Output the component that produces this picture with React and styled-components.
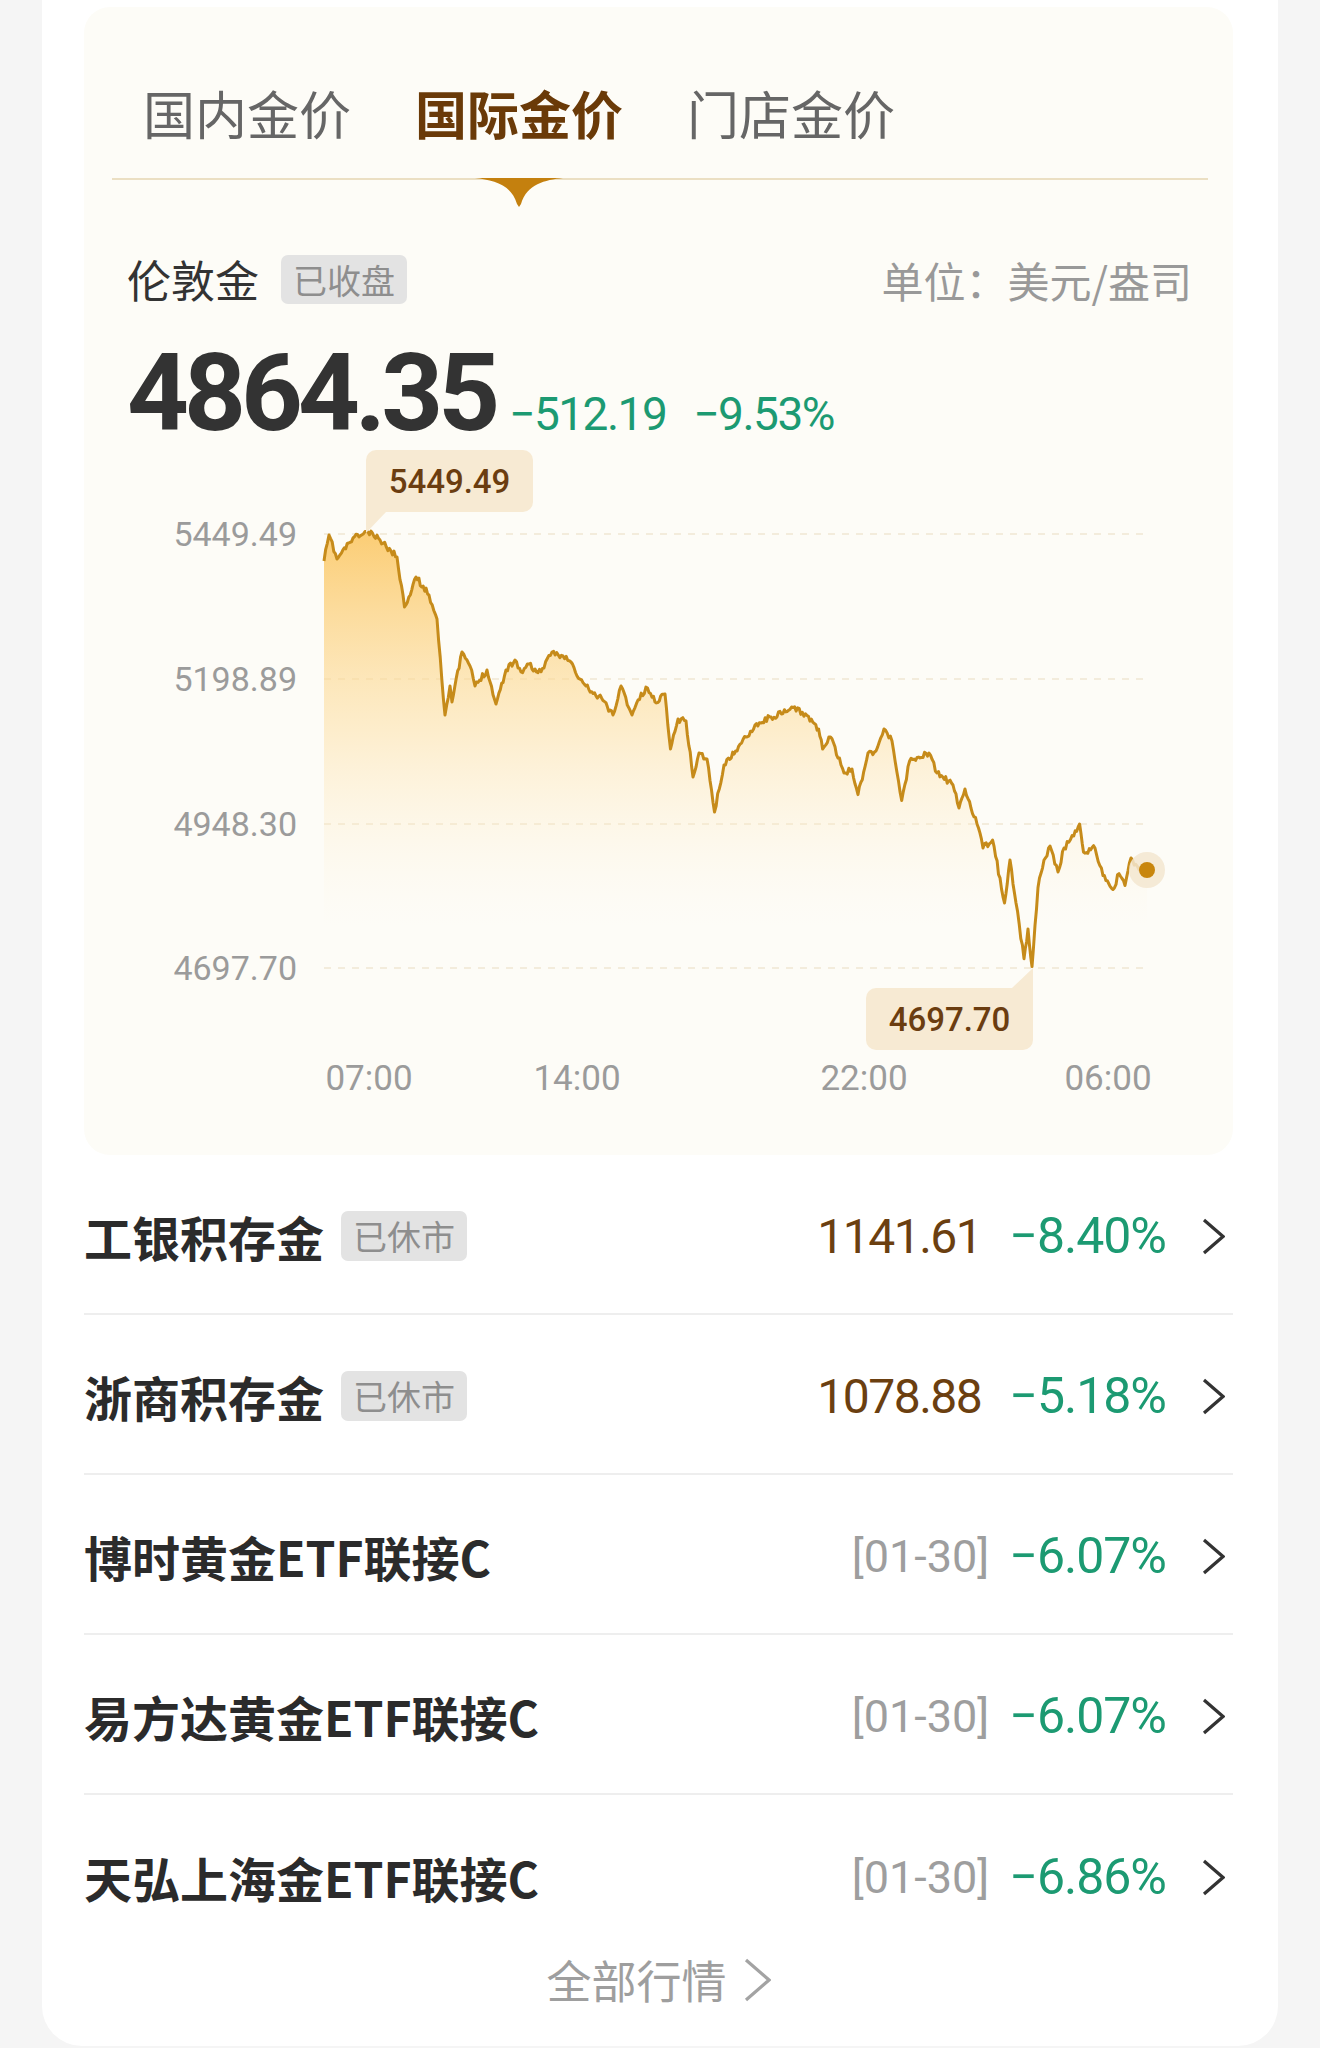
import React from "react";
import styled, { createGlobalStyle } from "styled-components";

const GlobalStyle = createGlobalStyle`
  body {
    margin: 0;
    background: #f5f5f5;
    font-family: "Noto Sans CJK SC", "Noto Sans", sans-serif;
  }
`;

const NUM = `Roboto, "Noto Sans", sans-serif`;

// key points of the price curve, picked off the screenshot (page coords)
const KEY = [
  [324, 561], [329, 535], [337, 559], [353, 538], [368, 532], [380, 540], [391, 551],
  [397, 557], [404.5, 607], [416, 577], [429, 595], [437, 619], [445, 715], [450, 686],
  [452, 702], [462, 652], [470, 666], [475, 686], [487, 670], [496, 704], [506, 670],
  [515, 660], [521, 672], [529, 664], [536.5, 672], [544, 668], [552, 652], [563, 656],
  [571, 662], [577, 676], [586, 686], [596, 696], [601.6, 698], [613, 715], [621, 686],
  [632, 715], [638, 700], [647.5, 688], [655, 702], [665, 694], [670.5, 749], [678, 719],
  [686, 721], [693, 777], [699, 753], [707, 759], [714.5, 812], [724, 765], [735.6, 751],
  [755, 725], [771, 717], [783, 713.5], [793, 707.6], [807, 715.5], [818.6, 729],
  [822.6, 749], [830.5, 737], [844, 773], [852, 769], [858, 794.6], [868, 753], [876, 751],
  [884, 729], [892, 741], [901.7, 800.5], [909.6, 761], [929, 753], [937, 773], [953, 785],
  [959, 808], [965, 789], [977, 824], [983, 848], [992.6, 840], [1004.5, 903], [1010, 860],
  [1016, 903], [1024, 958.7], [1028, 929], [1032, 966.6], [1038, 887.5], [1044, 860],
  [1050, 846], [1058, 872], [1064, 848], [1073.7, 836], [1079.6, 824], [1083.5, 852],
  [1095, 848], [1103, 875.6], [1113, 889.5], [1119, 873.7], [1125, 885.5], [1131, 858],
  [1139, 869.7], [1147, 869.7],
];

const ORIGIN_X = 84;
const ORIGIN_Y = 447;

function buildLine() {
  let seed = 11;
  const rand = () => {
    seed = (seed * 16807) % 2147483647;
    return seed / 2147483647;
  };
  const pts = [];
  for (let i = 0; i < KEY.length - 1; i++) {
    const [x0, y0] = KEY[i];
    const [x1, y1] = KEY[i + 1];
    const steps = Math.max(1, Math.round((x1 - x0) / 1.5));
    for (let s = 0; s < steps; s++) {
      const t = s / steps;
      const jitter = s === 0 ? 0 : (rand() - 0.5) * 6;
      pts.push([x0 + (x1 - x0) * t, y0 + (y1 - y0) * t + jitter]);
    }
  }
  pts.push(KEY[KEY.length - 1]);
  return pts.map(([x, y]) => [x - ORIGIN_X, y - ORIGIN_Y]);
}

const LINE = buildLine();
const LINE_D = "M" + LINE.map(([x, y]) => `${x.toFixed(1)},${y.toFixed(1)}`).join(" L");
const FILL_D = `${LINE_D} L1063,521 L240,521 Z`;

const GRID = [
  { y: 87, label: "5449.49" },
  { y: 232, label: "5198.89" },
  { y: 377, label: "4948.30" },
  { y: 521, label: "4697.70" },
];

const TIMES = [
  { x: 285, label: "07:00" },
  { x: 493, label: "14:00" },
  { x: 780, label: "22:00" },
  { x: 1024, label: "06:00" },
];

const ROWS = [
  { name: "工银积存金", badge: "已休市", price: "1141.61", change: "−8.40%" },
  { name: "浙商积存金", badge: "已休市", price: "1078.88", change: "−5.18%" },
  { name: "博时黄金ETF联接C", date: "[01-30]", change: "−6.07%" },
  { name: "易方达黄金ETF联接C", date: "[01-30]", change: "−6.07%" },
  { name: "天弘上海金ETF联接C", date: "[01-30]", change: "−6.86%" },
];

function Chevron({ color = "#333", w = 23, h = 37 }) {
  return (
    <svg width={w} height={h} viewBox={`0 0 ${w} ${h}`}>
      <polyline
        points={`2,2 ${w - 2},${h / 2} 2,${h - 2}`}
        fill="none"
        stroke={color}
        strokeWidth="3.2"
        strokeLinejoin="miter"
      />
    </svg>
  );
}

function PriceChart() {
  return (
    <ChartWrap>
      <svg width="1149" height="708" viewBox="0 0 1149 708">
        <defs>
          <linearGradient id="goldFill" x1="0" y1="87" x2="0" y2="480" gradientUnits="userSpaceOnUse">
            <stop offset="0" stopColor="#fbc867" stopOpacity="0.9" />
            <stop offset="0.5" stopColor="#fddea0" stopOpacity="0.5" />
            <stop offset="1" stopColor="#fef3dd" stopOpacity="0" />
          </linearGradient>
        </defs>
        {GRID.map((g) => (
          <g key={g.label}>
            <line x1="240" x2="1063" y1={g.y} y2={g.y} stroke="#efe6d4" strokeWidth="1.5" strokeDasharray="7 7" />
            <text x="213" y={g.y + 12} textAnchor="end" fontFamily="Roboto" fontSize="34" fill="#9b9b9b">
              {g.label}
            </text>
          </g>
        ))}
        <path d={FILL_D} fill="url(#goldFill)" />
        <path d={LINE_D} fill="none" stroke="#c68b1a" strokeWidth="3" strokeLinejoin="round" />
        <circle cx="1063" cy="423" r="18" fill="#f3e6d0" opacity="0.85" />
        <circle cx="1063" cy="423" r="8" fill="#c8860e" />
        {TIMES.map((t) => (
          <text key={t.label} x={t.x} y="643" textAnchor="middle" fontFamily="Roboto" fontSize="35" fill="#9b9b9b">
            {t.label}
          </text>
        ))}
      </svg>
      <Tip $x={282} $y={3} $tail="bl">5449.49</Tip>
      <Tip $x={782} $y={541} $tail="tr">4697.70</Tip>
    </ChartWrap>
  );
}

export default function App() {
  return (
    <Page>
      <GlobalStyle />
      <Card>
        <Panel>
          <TabBar>
            <Tab>国内金价</Tab>
            <Tab $active>
              国际金价
              <Indicator width="88" height="29" viewBox="0 0 88 29">
                <path d="M0,0 L88,0 C70,2 52,6 46,26 L44,29 L42,26 C36,6 18,2 0,0 Z" fill="#c4800e" />
              </Indicator>
            </Tab>
            <Tab>门店金价</Tab>
          </TabBar>

          <InfoHeader>
            <TitleGroup>
              <Title>伦敦金</Title>
              <Badge $h={49}>已收盘</Badge>
            </TitleGroup>
            <Unit>单位：美元/盎司</Unit>
          </InfoHeader>

          <PriceRow>
            <BigPrice>4864.35</BigPrice>
            <Delta $gap={14}>−512.19</Delta>
            <Delta $gap={27}>−9.53%</Delta>
          </PriceRow>

          <PriceChart />
        </Panel>

        <List>
          {ROWS.map((r, i) => (
            <Row key={r.name} $last={i === ROWS.length - 1}>
              <NameGroup>
                <Name>{r.name}</Name>
                {r.badge && <Badge $h={50}>{r.badge}</Badge>}
              </NameGroup>
              <Quote>
                {r.price && <ItemPrice>{r.price}</ItemPrice>}
                {r.date && <DateTag>{r.date}</DateTag>}
                <Change $gap={r.date ? 20 : 28}>{r.change}</Change>
                <Chevron />
              </Quote>
            </Row>
          ))}
        </List>

        <MoreLink>
          全部行情
          <Chevron color="#a3a3a3" w={27} h={44} />
        </MoreLink>
      </Card>
    </Page>
  );
}

const Page = styled.div`
  width: 1320px;
  min-height: 2048px;
  overflow: hidden;
`;

const Card = styled.div`
  box-sizing: border-box;
  width: 1236px;
  min-height: 2046px;
  margin-left: 42px;
  padding: 7px 45px 0 42px;
  background: #ffffff;
  border-radius: 0 0 40px 40px;
`;

const Panel = styled.div`
  display: flex;
  flex-direction: column;
  background: #fdfcf7;
  border-radius: 26px;
`;

const TabBar = styled.div`
  display: flex;
  gap: 64px;
  margin: 0 25px 0 28px;
  padding: 76px 0 35px 31px;
  border-bottom: 2px solid #ebdfc3;
`;

const Tab = styled.div`
  position: relative;
  font-size: 52px;
  line-height: 60px;
  font-weight: ${(p) => (p.$active ? 700 : 400)};
  color: ${(p) => (p.$active ? "#6a3a08" : "#666666")};
`;

const Indicator = styled.svg`
  position: absolute;
  top: calc(100% + 35px);
  left: 50%;
  transform: translateX(-50%);
`;

const InfoHeader = styled.div`
  display: flex;
  align-items: center;
  justify-content: space-between;
  height: 49px;
  margin-top: 75px;
  padding: 0 41px 0 43px;
`;

const TitleGroup = styled.div`
  display: flex;
  align-items: center;
  gap: 22px;
`;

const Title = styled.span`
  font-size: 44px;
  line-height: 49px;
  color: #333333;
`;

const Badge = styled.span`
  box-sizing: border-box;
  height: ${(p) => p.$h}px;
  padding: 0 12px;
  border-radius: 7px;
  background: #e3e3e3;
  color: #8e8e8e;
  font-size: 34px;
  font-weight: 400;
  line-height: ${(p) => p.$h}px;
`;

const Unit = styled.span`
  font-size: 42px;
  line-height: 49px;
  color: #999999;
`;

const PriceRow = styled.div`
  display: flex;
  align-items: baseline;
  height: 108px;
  margin-top: 35px;
  padding-left: 43px;
`;

const BigPrice = styled.span`
  font-family: ${NUM};
  font-size: 108px;
  font-weight: 700;
  line-height: 108px;
  letter-spacing: -5px;
  color: #333333;
`;

const Delta = styled.span`
  margin-left: ${(p) => p.$gap}px;
  font-family: ${NUM};
  font-size: 46px;
  letter-spacing: -1.5px;
  color: #1c9a72;
`;

const ChartWrap = styled.div`
  position: relative;
  height: 708px;

  svg {
    display: block;
  }
`;

const Tip = styled.div`
  position: absolute;
  left: ${(p) => p.$x}px;
  top: ${(p) => p.$y}px;
  width: 167px;
  height: 62px;
  display: flex;
  align-items: center;
  justify-content: center;
  background: #f7ead3;
  border-radius: ${(p) => (p.$tail === "bl" ? "10px 10px 10px 0" : "10px 0 10px 10px")};
  font-family: ${NUM};
  font-size: 33px;
  font-weight: 500;
  color: #6b3d10;

  &::after {
    content: "";
    position: absolute;
    width: 0;
    height: 0;
    ${(p) =>
      p.$tail === "bl"
        ? `left: 0; top: 100%; border-top: 21px solid #f7ead3; border-right: 20px solid transparent;`
        : `right: 0; bottom: 100%; border-bottom: 20px solid #f7ead3; border-left: 21px solid transparent;`}
  }
`;

const List = styled.div`
  display: flex;
  flex-direction: column;
`;

const Row = styled.div`
  box-sizing: border-box;
  display: flex;
  align-items: center;
  justify-content: space-between;
  height: 160px;
  padding: 4px 8px 0 0;
  border-bottom: ${(p) => (p.$last ? "none" : "2px solid #eeeeee")};
`;

const NameGroup = styled.div`
  display: flex;
  align-items: center;
  gap: 17px;
`;

const Name = styled.span`
  font-size: 48px;
  font-weight: 700;
  line-height: 60px;
  color: #2b2b2b;
`;

const Quote = styled.div`
  display: flex;
  align-items: center;
`;

const ItemPrice = styled.span`
  font-family: ${NUM};
  font-size: 48px;
  letter-spacing: -1.5px;
  color: #6b3f10;
`;

const DateTag = styled.span`
  font-family: ${NUM};
  font-size: 45px;
  color: #9e9e9e;
`;

const Change = styled.span`
  margin: 0 36px 0 ${(p) => p.$gap}px;
  font-family: ${NUM};
  font-size: 50px;
  letter-spacing: -1px;
  color: #1c9a72;
`;

const MoreLink = styled.div`
  display: flex;
  align-items: center;
  justify-content: center;
  gap: 17px;
  height: 50px;
  font-size: 45px;
  line-height: 50px;
  color: #9e9e9e;
`;
